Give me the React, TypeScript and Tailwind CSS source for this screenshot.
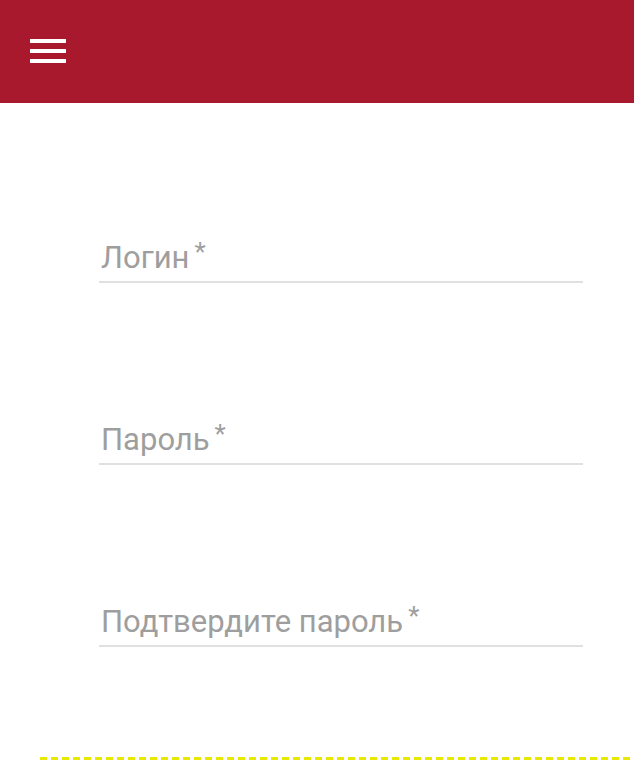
export default function App() {
  const fields = ["Логин", "Пароль", "Подтвердите пароль"];

  return (
    <div className="w-[634px] h-[775px] bg-white overflow-hidden" style={{ fontFamily: "Roboto, 'Noto Sans', sans-serif" }}>
      <header className="h-[103px] bg-[#a8192d] flex items-center pl-[30px]">
        <button className="flex flex-col gap-[6px] w-[36px] -mt-[2px]">
          <span className="block h-[4px] w-full bg-white" />
          <span className="block h-[4px] w-full bg-white" />
          <span className="block h-[4px] w-full bg-white" />
        </button>
      </header>

      <form className="pl-[99px] pr-[51px] pt-[137px] flex flex-col gap-[139px]">
        {fields.map((f) => (
          <div key={f} className="border-b-2 border-[#e0e0e0] pb-[5px]">
            <label className="block h-[36px] pl-[2px] text-[31px] leading-[36px] text-[#9e9e9e]">
              {f}
              <span className="relative -top-[7px] ml-[5px] text-[26px] leading-none">*</span>
            </label>
          </div>
        ))}
      </form>

      <div className="mt-[110px] ml-[40px] h-[3px] bg-[repeating-linear-gradient(90deg,#e8e800_0px,#e8e800_7px,transparent_7px,transparent_11px)]" />
    </div>
  );
}
